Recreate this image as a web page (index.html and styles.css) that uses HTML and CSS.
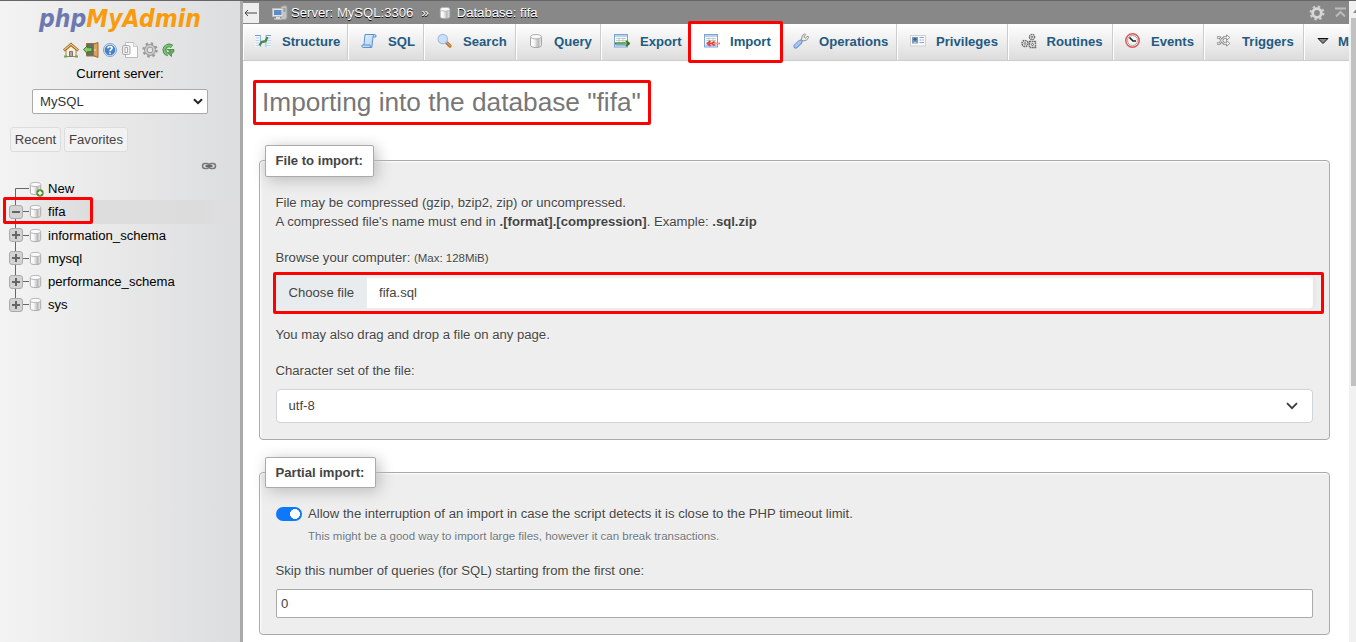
FILE: index.html
```html
<!DOCTYPE html>
<html lang="en">
<head>
<meta charset="utf-8">
<title>phpMyAdmin - Import</title>
<link rel="stylesheet" href="styles.css">
</head>
<body>
<svg class="sprites" aria-hidden="true">
  <defs>
    <linearGradient id="cyl"><stop offset="0" stop-color="#fff"/><stop offset=".35" stop-color="#f4f4f4"/><stop offset=".7" stop-color="#b8b8b8"/><stop offset="1" stop-color="#f2f2f2"/></linearGradient>
    <linearGradient id="blue" x2="1" y2="1"><stop offset="0" stop-color="#e9f3fd"/><stop offset="1" stop-color="#a5ccf2"/></linearGradient>
  </defs>
  <symbol id="db" viewBox="0 0 16 16"><path d="M2.500 4v8.400c0 1.300 2.300 2.100 5.500 2.100s5.500-.8 5.500-2.100V4" fill="url(#cyl)" stroke="#a6a6a6"/><ellipse cx="8" cy="3.700" rx="5.500" ry="2.200" fill="#fafafa" stroke="#b0b0b0"/></symbol>
  <symbol id="home" viewBox="0 0 16 16"><path d="M3 8v6.500h10V8L8 4z" fill="#fbefd5" stroke="#a98550"/><path d="M.8 8.500L8 2.300l7.200 6.200" fill="none" stroke="#9a6422" stroke-width="2.600"/><path d="M1.200 8L8 2.300 14.800 8" fill="none" stroke="#e8bf80" stroke-width="1.200"/><path d="M6.500 14.500v-5h3v5z" fill="#aaa" stroke="#777"/><path d="M1 14.500h3M12 14.500h3" stroke="#6da653" stroke-width="2"/></symbol>
  <symbol id="exit" viewBox="0 0 16 16"><path d="M3.500 1.500h11v12.500h-11z" fill="#696e62" stroke="#9b7040"/><path d="M10.500 2l4.500-1.500v15l-4.500-2z" fill="#d9a25d" stroke="#a66b29"/><path d="M.5 7.500L4.500 3.500v2.200H9v4H4.500v2.100z" fill="#8aca68" stroke="#397a2e"/><circle cx="12" cy="8" r=".7" fill="#fff"/></symbol>
  <symbol id="help" viewBox="0 0 16 16"><circle cx="8" cy="8" r="6.500" fill="#dce9f8" stroke="#7ba3d4"/><circle cx="8" cy="8" r="5.300" fill="#4a82c6"/><path d="M5.900 6.300Q6 4.500 8 4.500t2.100 1.600Q10.100 7.100 8.900 7.700 8 8.100 8 9.200M8 10.400v1.500" fill="none" stroke="#fff" stroke-width="1.600"/></symbol>
  <symbol id="doc" viewBox="0 0 16 16"><path d="M3.500.5h8l4 4v11h-12z" fill="#fcfcfc" stroke="#bbb"/><path d="M11.500.5v4h4" fill="#eee" stroke="#ccc"/><rect x=".5" y="3.500" width="7.500" height="9" rx="1.500" fill="#eee" stroke="#aaa"/><path d="M3 5.500h2.500v5H3z" fill="#fff" stroke="#aaa"/></symbol>
  <symbol id="cog" viewBox="0 0 16 16"><circle cx="8" cy="8" r="6.500" fill="none" stroke="#999" stroke-width="2.400" stroke-dasharray="2.400 2.705"/><circle cx="8" cy="8" r="4.100" fill="none" stroke="#999" stroke-width="3.600"/><circle cx="8" cy="8" r="4.100" fill="none" stroke="#c9c9c9" stroke-width="2"/></symbol>
  <symbol id="cogw" viewBox="0 0 16 16"><circle cx="8" cy="8" r="6.300" fill="none" stroke="#ccc" stroke-width="2.400" stroke-dasharray="2.400 2.548"/><circle cx="8" cy="8" r="4.300" fill="none" stroke="#d8d8d8" stroke-width="2.800"/></symbol>
  <symbol id="reload" viewBox="0 0 14 14"><path d="M11 3.500A4.600 4.600 0 1 0 7 11.500" fill="none" stroke="#3d8a40" stroke-width="3.800"/><path d="M6 6.500h7q.5 3-2.500 4.200v2.800L6.500 10l3-2z" fill="#65ae60" stroke="#3d8a40" stroke-width=".8"/><path d="M10.800 3.400A4.600 4.600 0 1 0 7 11.500" fill="none" stroke="#7cc174" stroke-width="2"/></symbol>
  <symbol id="link" viewBox="0 0 16 16"><rect x="1.500" y="5.500" width="6.500" height="5" rx="2.500" fill="none" stroke="#777" stroke-width="1.500"/><rect x="8" y="5.500" width="6.500" height="5" rx="2.500" fill="none" stroke="#777" stroke-width="1.500"/><path d="M4.500 8h2.500M9 8h2.500M7.500 8h1" stroke="#444" stroke-width="1.500"/></symbol>
  <symbol id="plus" viewBox="0 0 14 14"><rect x=".5" y=".5" width="13" height="13" rx="2.500" fill="#d3d3d3" stroke="#aaa"/><path d="M3 7h8M7 3v8" stroke="#666" stroke-width="2"/></symbol>
  <symbol id="minus" viewBox="0 0 14 14"><rect x=".5" y=".5" width="13" height="13" rx="2.500" fill="#d3d3d3" stroke="#aaa"/><path d="M3 7h8" stroke="#666" stroke-width="2"/></symbol>
  <symbol id="server" viewBox="0 0 16 16"><path d="M9 1.500l4-1 2 1v12L12 15l-3-1z" fill="#c4c4c4" stroke="#999"/><path d="M10.500 4h3M10.500 6h3" stroke="#777"/><rect x=".5" y="3.500" width="10.500" height="8" fill="#e4e4e4" stroke="#bbb"/><path d="M2 5h7.500v5H2z" fill="#5a8cc9"/><path d="M4 12h4v1.500h2v1H2v-1h2z" fill="#ddd"/></symbol>
  <symbol id="structure" viewBox="0 0 16 16"><path d="M0 2h5.500v12H0zM11 2h5v12h-5z" fill="#f3f8fe"/><path d="M0 2.500h5.500M11 2.500h5" stroke="#6fa0dc"/><path d="M.5 5h4M.5 7.500h4M.5 10h4M.5 12.500h4M12 5h4M12 7.500h4M12 10h4M12 12.500h4" stroke="#a8c8ec" stroke-width=".8"/><path d="M5.500 2v12M11 2v12" stroke="#7ba9e0" stroke-width=".8"/><path d="M4.500 12.500L6.500 9l4-.8L12.500 4" fill="none" stroke="#4a8b48" stroke-width="2.300"/></symbol>
  <symbol id="sql" viewBox="0 0 16 16"><path d="M4 1.500h9.500q2 0 1.500 2.500h-3L10.800 14.500H2.200Q.3 14.300 1 12h2z" fill="url(#blue)" stroke="#5f92cc"/><path d="M12 4q0-2.500 1.500-2.500M3 12h6q0 2.500 1.800 2.500" fill="none" stroke="#5f92cc"/></symbol>
  <symbol id="search" viewBox="0 0 16 16"><path d="M9.500 9.500l3.500 3.500" stroke="#b97935" stroke-width="3.400" stroke-linecap="round"/><path d="M9.700 9.300l3.500 3.500" stroke="#e4b075" stroke-linecap="round"/><circle cx="5.800" cy="6" r="4.700" fill="#c8e1fa" stroke="#a4bde2" stroke-width="1.200"/></symbol>
  <symbol id="sheet" viewBox="0 0 16 16"><rect x=".5" y="1.500" width="13" height="12.500" fill="#fff" stroke="#7ba4d8"/><path d="M1 3h12" stroke="#b8d2ee" stroke-width="2"/><path d="M2 5.500h10M2 7.500h10M2 9.500h10M5 4.500v6M9 4.500v6" stroke="#b3c8b3" stroke-width=".8"/><path d="M1.500 12.500h11" stroke="#9fc0e8" stroke-width="2"/></symbol>
  <symbol id="export" viewBox="0 0 16 16"><use href="#sheet" width="16" height="16"/><path d="M1 10.500h10.500M12 8l3 2.500-3 2.500" fill="none" stroke="#2f762e" stroke-width="2.200"/><path d="M2 10.500h11" stroke="#61ad58"/></symbol>
  <symbol id="import" viewBox="0 0 16 16"><use href="#sheet" width="16" height="16"/><path d="M16 10.500H4M6.500 7.800L3.500 10.500l3 2.700M10.500 8.300L8 10.500l2.500 2.200" fill="none" stroke="#ec3e3e" stroke-width="1.700"/><path d="M9 10.500h6.500" stroke="#fa9a9a"/></symbol>
  <symbol id="wrench" viewBox="0 0 16 16"><path d="M7.500 8.500l3.500-3.500" stroke="#999" stroke-width="3"/><path d="M11.800.7L9.300 2.500 8.500 6.500 10 8l3.500-.8 2-2.500-.5-1.700-2.500 2-1.700-1L12.700 1.500z" fill="#eee" stroke="#888" stroke-width=".9"/><path d="M2.700 13.300L7 9.300" stroke="#7097d4" stroke-width="4.600" stroke-linecap="round"/><path d="M2.700 13L7 9" stroke="#a9c8f3" stroke-width="2.600" stroke-linecap="round"/></symbol>
  <symbol id="card" viewBox="0 0 16 16"><rect x=".5" y="2.500" width="15" height="10.500" fill="#fafafa" stroke="#d0d0d0"/><rect x="2" y="4" width="6" height="6.500" fill="#5da2df"/><circle cx="5" cy="6.200" r="1.500" fill="#7d4d2b"/><path d="M3 10.500q2-3.500 4 0z" fill="#eac38d"/><path d="M9.500 4.500h4.500M9.500 7h2M12.500 7h1.500M9.500 9.500h4.500" stroke="#7caad7"/></symbol>
  <symbol id="gears" viewBox="0 0 16 16"><g fill="none" stroke="#666"><circle cx="11" cy="4" r="2.600" stroke-dasharray="1.500 .6" stroke-width="1.300"/><circle cx="11" cy="4" r=".9" stroke-width=".8"/><circle cx="4" cy="10.500" r="3" stroke-dasharray="1.600 .7" stroke-width="1.500"/><circle cx="4" cy="10.500" r="1" stroke-width=".8"/><path d="M8.500 8.500h6v6h-6z" stroke-dasharray="1.700 .6" stroke-width="1.400"/><circle cx="11.500" cy="11.500" r="1"/></g></symbol>
  <symbol id="clock" viewBox="0 0 16 16"><circle cx="7.500" cy="7.500" r="6.700" fill="#fff" stroke="#e05555" stroke-width="1.500"/><circle cx="7.500" cy="7.500" r="5" fill="#f5f5f5" stroke="#999" stroke-width=".9"/><path d="M4.500 4.500L8 8h3" fill="none" stroke="#222" stroke-width="1.700"/></symbol>
  <symbol id="trigger" viewBox="0 0 16 16"><g transform="translate(0 .5) scale(.92 .9)"><path d="M1 4.500h3l4.500 6.500h4M1 11h3l4.500-6.500h4" fill="none" stroke="#888" stroke-width="2.800"/><path d="M11.500 1.500L15 4.500l-3.500 3zM11.500 8L15 11l-3.500 3z" fill="#fff" stroke="#888"/><path d="M1.500 4.500h2.500l4.500 6.500h4M1.500 11h2.500l4.500-6.500h4" fill="none" stroke="#f4f4f4"/></g></symbol>
</svg>

<div class="app">
  <aside class="sidebar">
    <svg class="logo" width="170" height="32" viewBox="0 0 170 32"><text x="4" y="25" textLength="162" lengthAdjust="spacingAndGlyphs"><tspan class="php">php</tspan><tspan class="mya">MyAdmin</tspan></text></svg>
    <div class="quick">
      <svg class="icon"><use href="#home"/></svg><svg class="icon"><use href="#exit"/></svg><svg class="icon"><use href="#help"/></svg><svg class="icon"><use href="#doc"/></svg><svg class="icon"><use href="#cog"/></svg><svg class="icon small"><use href="#reload"/></svg>
    </div>
    <div class="current"><span>Current server:</span></div>
    <div class="server-select"><span>MySQL</span><svg width="10" height="7" viewBox="0 0 10 7"><path d="M1 1.200l4 4 4-4" fill="none" stroke="#222" stroke-width="2"/></svg></div>
    <div class="recent"><span class="chip chip-recent">Recent</span><span class="chip chip-fav">Favorites</span></div>
    <div class="linkrow"><svg class="icon"><use href="#link"/></svg></div>
    <ul class="tree">
      <li class="node first"><svg class="branch" width="22" height="23"><path d="M6.500 23V11.500H22" fill="none" stroke="#666"/></svg><span class="dbicon"><svg class="dbi"><use href="#db"/></svg><svg class="badge" viewBox="0 0 8 8"><circle cx="4" cy="4" r="3.700" fill="#4f8f31"/><path d="M4 1.800v4.400M1.800 4h4.400" stroke="#fff" stroke-width="1.400"/></svg></span><span>New</span></li>
      <li class="node active"><span class="branch"><svg class="toggle"><use href="#minus"/></svg></span><span class="dbicon"><svg class="dbi"><use href="#db"/></svg></span><span>fifa</span></li>
      <li class="node"><span class="branch"><svg class="toggle"><use href="#plus"/></svg></span><span class="dbicon"><svg class="dbi"><use href="#db"/></svg></span><span>information_schema</span></li>
      <li class="node"><span class="branch"><svg class="toggle"><use href="#plus"/></svg></span><span class="dbicon"><svg class="dbi"><use href="#db"/></svg></span><span>mysql</span></li>
      <li class="node"><span class="branch"><svg class="toggle"><use href="#plus"/></svg></span><span class="dbicon"><svg class="dbi"><use href="#db"/></svg></span><span>performance_schema</span></li>
      <li class="node last"><span class="branch"><svg class="toggle"><use href="#plus"/></svg></span><span class="dbicon"><svg class="dbi"><use href="#db"/></svg></span><span>sys</span></li>
    </ul>
  </aside>

  <main class="main">
    <header class="crumbs">
      <span class="back"><svg width="13" height="8" viewBox="0 0 13 8"><path d="M13 4H1M4 1L1 4l3 3" fill="none" stroke="#444"/></svg></span>
      <svg class="icon c-server"><use href="#server"/></svg><span class="c-text">Server: MySQL:3306</span><span class="c-sep">»</span><svg class="c-db"><use href="#db"/></svg><span class="c-text">Database: fifa</span>
      <span class="crumb-tools"><svg class="icon"><use href="#cogw"/></svg><svg width="11" height="11" viewBox="0 0 11 11"><path d="M0 1.500h11M1 9.500L5.500 5 10 9.500" fill="none" stroke="#bbb" stroke-width="2"/></svg></span>
    </header>
    <nav class="tabs">
      <a class="tab w-structure"><svg class="icon"><use href="#structure"/></svg><span>Structure</span></a>
      <a class="tab w-sql"><svg class="icon"><use href="#sql"/></svg><span>SQL</span></a>
      <a class="tab w-search"><svg class="icon"><use href="#search"/></svg><span>Search</span></a>
      <a class="tab w-query"><svg class="icon"><use href="#db"/></svg><span>Query</span></a>
      <a class="tab w-export"><svg class="icon"><use href="#export"/></svg><span>Export</span></a>
      <a class="tab w-import"><svg class="icon"><use href="#import"/></svg><span>Import</span></a>
      <a class="tab w-operations"><svg class="icon"><use href="#wrench"/></svg><span>Operations</span></a>
      <a class="tab w-privileges"><svg class="icon"><use href="#card"/></svg><span>Privileges</span></a>
      <a class="tab w-routines"><svg class="icon"><use href="#gears"/></svg><span>Routines</span></a>
      <a class="tab w-events"><svg class="icon"><use href="#clock"/></svg><span>Events</span></a>
      <a class="tab w-triggers"><svg class="icon"><use href="#trigger"/></svg><span>Triggers</span></a>
      <a class="tab w-more"><svg class="icon" viewBox="0 0 16 16"><path d="M3 5.500h10L8 10.500z" fill="#888" stroke="#111"/></svg><span>M</span></a>
    </nav>
    <div class="page">
      <h1><span>Importing into the database "fifa"</span></h1>
      <section class="box box-file">
        <h2 class="legend legend-file"><span>File to import:</span></h2>
        <p><span>File may be compressed (gzip, bzip2, zip) or uncompressed.</span></p>
        <p><span>A compressed file's name must end in <b>.[format].[compression]</b>. Example: <b>.sql.zip</b></span></p>
        <p class="browse"><span>Browse your computer:</span> <small>(Max: 128MiB)</small></p>
        <div class="filepick"><span class="choose">Choose file</span><span class="fname">fifa.sql</span></div>
        <p class="drag"><span>You may also drag and drop a file on any page.</span></p>
        <p class="charset"><span>Character set of the file:</span></p>
        <div class="select"><span>utf-8</span><svg width="12" height="8" viewBox="0 0 12 8"><path d="M1 1.200l5 5 5-5" fill="none" stroke="#343a40" stroke-width="1.700"/></svg></div>
      </section>
      <section class="box box-partial">
        <h2 class="legend legend-partial"><span>Partial import:</span></h2>
        <div class="switchrow"><span class="switch"></span><span>Allow the interruption of an import in case the script detects it is close to the PHP timeout limit.</span></div>
        <p class="hint"><span>This might be a good way to import large files, however it can break transactions.</span></p>
        <p class="skip"><span>Skip this number of queries (for SQL) starting from the first one:</span></p>
        <div class="number">0</div>
      </section>
    </div>
  </main>
  <div class="scrollbar"><svg width="7" height="18" viewBox="0 0 7 18"><path d="M4 12l3-3.500V12z" fill="#888"/></svg><div class="thumb"></div></div>
</div>
<div class="mark mark-tab"></div>
<div class="mark mark-title"></div>
<div class="mark mark-file"></div>
<div class="mark mark-db"></div>
</body>
</html>
```
FILE: styles.css
```css
* { box-sizing: border-box; }
body { margin: 0; width: 1356px; height: 642px; overflow: hidden; position: relative; background: #fff; color: #444; font: 13.12px/19px "Liberation Sans", Arial, sans-serif; }
svg { display: block; flex: none; }
p, h1, h2, ul { margin: 0; padding: 0; }
span, b { white-space: nowrap; }
.sprites { position: absolute; width: 0; height: 0; }
.icon { width: 16px; height: 16px; }
.app { display: flex; height: 642px; border-top: 1px solid #666; }

.sidebar { width: 243px; flex: none; border-right: 3px solid #aaa; background: linear-gradient(to right, #f3f3f3, #dcddde); color: #000; }
.logo { margin: 1px 0 0 35px; }
.logo text { font: italic 700 24px "DejaVu Sans", sans-serif; }
.php { fill: #6c78af; }
.mya { fill: #f89c0e; }
.quick { display: flex; gap: 3.700px; margin: 8px 0 0 63px; height: 16px; align-items: center; }
.icon.small { width: 14px; height: 14px; }
.current { margin-top: 6px; height: 20px; line-height: 20px; text-align: center; }
.server-select { margin: 5px 0 0 32px; width: 176px; height: 25px; border: 1px solid #aaa; border-radius: 2px; background: #fff; color: #333; display: flex; align-items: center; justify-content: space-between; padding: 0 4px 0 7px; }
.recent { display: flex; gap: 3px; margin: 13px 0 0 10px; }
.chip { height: 25px; line-height: 24px; border: 1px solid #ddd; border-radius: 3px; background: #f2f2f2; color: #444; text-align: center; }
.chip-recent { width: 51px; }
.chip-fav { width: 64px; }
.linkrow { height: 25px; padding: 6px 0 0 201px; }
.tree { list-style: none; }
.node { height: 23.250px; display: flex; align-items: center; padding-left: 9px; }
.active { background: linear-gradient(to right, rgba(221,221,221,0) 0, #ddd 90px, #dcdcdd 200px, rgba(221,221,221,0)); }
.branch { width: 20px; height: 100%; display: flex; align-items: center; background: linear-gradient(#666, #666) 6px 0 / 1px 100% no-repeat, linear-gradient(#666, #666) 14px 50% / 6px 1px no-repeat; }
.first .branch { background: none; }
.last .branch { background-size: 1px 50%, 6px 1px; }
.toggle { width: 14px; height: 14px; }
.dbicon { position: relative; width: 19px; }
.dbi { width: 15px; height: 15px; margin-left: -1px; }
.badge { position: absolute; width: 8px; height: 8px; left: 7px; top: 8px; }

.main { width: 1106px; flex: none; overflow: hidden; }
.crumbs { display: flex; align-items: center; height: 23px; background: #888; color: #fff; text-shadow: 0 1px 0 #000; }
.back { width: 16px; height: 20px; margin-right: 13px; background: #eee; display: flex; align-items: center; padding-left: 1px; }
.c-text { line-height: 23px; }
.c-server { margin-right: 3px; }
.c-sep { margin: 0 9px 0 8px; }
.c-db { width: 14px; height: 14px; margin-right: 5px; }
.crumb-tools { margin-left: auto; display: flex; gap: 10px; align-items: center; padding-right: 3px; }
.tabs { display: flex; height: 37px; border-bottom: 1px solid #ccc; background: linear-gradient(#fff, #dcdcdc); }
.tab { flex: none; display: flex; align-items: center; gap: 10px; padding: 0 0 2px 12px; border-left: 1px solid #fff; border-right: 1px solid #ccc; color: #235a81; font-weight: bold; }
.w-structure { width: 105px; padding-left: 11px; gap: 11px; }
.w-sql { width: 76px; gap: 11px; }
.w-search { width: 92px; }
.w-query { width: 85px; padding-left: 11px; }
.w-export { width: 89px; }
.w-import { width: 91px; background: #fff; padding-left: 13px; }
.w-operations { width: 116px; padding-left: 11px; }
.w-privileges { width: 111px; }
.w-routines { width: 105px; padding-left: 11.500px; }
.w-events { width: 91px; padding-left: 11px; }
.w-triggers { width: 100px; padding-left: 11px; }
.w-more { width: 60px; padding-left: 10px; gap: 7px; }

.page { padding: 23px 19px 0 16px; }
h1 { height: 36px; padding-left: 3px; font-size: 26.240px; line-height: 36px; font-weight: normal; color: #777; }
.box { width: 1071px; border: 1px solid #aaa; border-radius: 4px; background: #eee; padding: 0 16px; text-shadow: 0 1px 0 #fff; box-shadow: inset 1px 1px 2px #fff; }
.box p { height: 19px; margin-left: -.500px; }
.box-file { margin-top: 40px; height: 280px; }
.box-partial { margin-top: 32px; height: 163px; }
.legend { height: 32px; margin: -16px 0 0 -11px; border: 1px solid #aaa; border-radius: 2px; background: #fff; box-shadow: 3px 3px 15px #bbb; font-size: 13.120px; line-height: 30px; padding-left: 9.500px; }
.legend-file { width: 109px; margin-bottom: 16px; }
.legend-partial { width: 111px; height: 31px; margin-bottom: 16px; }
.box .browse { margin-top: 17px; }
small { font-size: 11.480px; }
.filepick { margin-top: 9px; height: 32px; display: flex; align-items: center; background: #fff; border-radius: 3px; text-shadow: none; box-shadow: inset 0 2px 2px #eee, 3px 0 2px #e7e7e7; }
.choose { width: 91px; height: 32px; line-height: 34px; padding-left: 12.500px; background: #e9ecef; }
.fname { padding-left: 12px; }
.box .drag { margin-top: 17px; }
.box .charset { margin-top: 17px; }
.select { margin-top: 9px; height: 34px; display: flex; align-items: center; justify-content: space-between; padding: 0 14px 1px 11.500px; background: #fff; border: 1px solid #ced4da; border-radius: 4px; text-shadow: none; }
.switchrow { height: 19px; display: flex; align-items: center; gap: 6px; }
.switch { width: 26px; height: 14px; border-radius: 7px; background: radial-gradient(circle at 19px 7px, #fff 4.700px, #0d78fa 5.200px); }
.box .hint { margin: 4px 0 0 32px; color: #6c757d; font-size: 11.480px; }
.box .skip { margin-top: 15px; }
.number { height: 29px; margin-top: 9px; padding-left: 4px; line-height: 27px; background: #fff; border: 1px solid #aaa; border-radius: 2px; text-shadow: none; }

.scrollbar { width: 7px; flex: none; background: #f1f1f1; }
.thumb { margin-left: 2px; height: 368px; background: #c1c1c1; margin-top: -1px; }

.mark { position: absolute; border: 3px solid #f00; border-radius: 2px; }
.mark-tab { left: 688px; top: 21px; width: 95px; height: 42px; }
.mark-title { left: 253px; top: 80px; width: 398px; height: 45px; }
.mark-file { left: 273px; top: 272px; width: 1051px; height: 42px; }
.mark-db { left: 3px; top: 197px; width: 90px; height: 27px; }
```
